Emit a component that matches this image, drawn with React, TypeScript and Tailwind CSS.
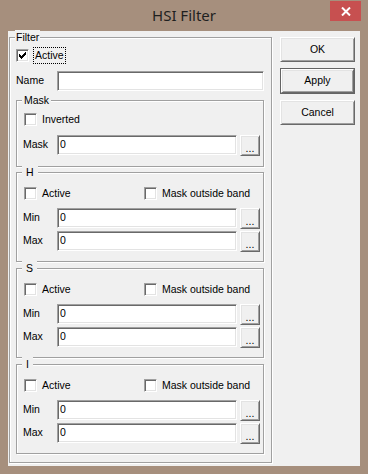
import React from 'react';

// classic 3D borders
const sunken =
  'border border-t-[#a0a0a0] border-l-[#a0a0a0] border-r-white border-b-white shadow-[inset_1px_1px_0_#696969,inset_-1px_-1px_0_#e3e3e3] bg-white';
const raised =
  'border border-t-white border-l-white border-r-[#696969] border-b-[#696969] shadow-[inset_1px_1px_0_#e3e3e3,inset_-1px_-1px_0_#a0a0a0] bg-[#f0f0f0]';
const etched = 'border border-[#a0a0a0] shadow-[inset_1px_1px_0_#fff,1px_1px_0_#fff]';

const CheckBox = ({ checked }: { checked?: boolean }) => (
  <span className={`w-[13px] h-[13px] shrink-0 flex items-center justify-center ${sunken}`}>
    {checked && (
      <svg width="7" height="7" viewBox="0 0 7 7" shapeRendering="crispEdges">
        <polygon points="0,2 2,4 7,-1 7,2 2,7 0,5" fill="#000" />
      </svg>
    )}
  </span>
);

const Group = ({ title, titleClass, className, children }: { title: string; titleClass: string; className: string; children: React.ReactNode }) => (
  <div className={`relative ${etched} ${className}`}>
    <span className={`absolute top-[-8px] bg-[#f0f0f0] leading-[14px] ${titleClass}`}>{title}</span>
    {children}
  </div>
);

const Field = ({ value, className }: { value?: string; className: string }) => (
  <div className={`h-[20px] flex items-center pl-[2px] ${sunken} ${className}`}>{value}</div>
);

const DotsButton = () => (
  <button className={`w-[20px] h-[21px] flex items-end justify-center pb-[3px] leading-[8px] ${raised}`}>...</button>
);

const FieldRow = ({ label, labelWidth, mt }: { label: string; labelWidth: string; mt: string }) => (
  <div className={`flex items-start h-[21px] ${mt}`}>
    <span className={`h-[20px] flex items-center ${labelWidth}`}>{label}</span>
    <Field value="0" className="w-[180px]" />
    <div className="ml-[3px]">
      <DotsButton />
    </div>
  </div>
);

const BandGroup = ({ title, mt }: { title: string; mt: string }) => (
  <Group title={title} titleClass="left-[5px] px-[4px]" className={`w-[248px] h-[90px] pl-[6px] ${mt}`}>
    <div className="flex items-center mt-[14px] h-[13px]">
      <span className="ml-[1px] flex items-center gap-[5px] w-[120px]">
        <CheckBox />
        <span>Active</span>
      </span>
      <span className="flex items-center gap-[5px]">
        <CheckBox />
        <span>Mask outside band</span>
      </span>
    </div>
    <FieldRow label="Min" labelWidth="w-[34px]" mt="mt-[8px]" />
    <FieldRow label="Max" labelWidth="w-[34px]" mt="mt-[2px]" />
  </Group>
);

const DialogButton = ({ label, isDefault }: { label: string; isDefault?: boolean }) =>
  isDefault ? (
    <div className="w-[75px] h-[26px] border border-[#646464]">
      <button className={`w-full h-full flex items-center justify-center ${raised}`}>{label}</button>
    </div>
  ) : (
    <button className={`w-[75px] h-[25px] flex items-center justify-center ${raised}`}>{label}</button>
  );

export default function App() {
  return (
    <div className="w-[368px] h-[474px] bg-[#a68f7d] flex flex-col font-['Liberation_Sans',Arial,sans-serif] text-[10.5px] text-black">
      {/* Title bar */}
      <div className="relative h-[31px] shrink-0 flex items-center justify-center">
        <span className="font-['Noto_Sans',sans-serif] text-[15px] text-[#1f1f1f] leading-none -mt-[1px]">HSI Filter</span>
        <button className="absolute right-[7px] top-[1px] w-[31px] h-[20px] bg-[#c75050] flex items-center justify-center">
          <svg width="10" height="9" viewBox="0 0 10 9">
            <path d="M1 0.5 L9 8.5 M9 0.5 L1 8.5" stroke="#fff" strokeWidth="2" />
          </svg>
        </button>
      </div>

      {/* Client area */}
      <div className="mx-[8px] h-[435px] bg-[#f0f0f0] flex items-start pl-[1px] pt-[6px] gap-[8px]">
        <Group title="Filter" titleClass="left-[5px] px-[1px]" className="w-[263px] h-[426px] pl-[6px]">
          <div className="flex items-center mt-[9px] h-[17px]">
            <CheckBox checked />
            <span className="ml-[4px] h-[17px] px-[1px] flex items-center border border-dotted border-black">Active</span>
          </div>

          <div className="flex items-center mt-[7px] h-[20px]">
            <span className="w-[41px]">Name</span>
            <Field className="w-[207px]" />
          </div>

          <Group title="Mask" titleClass="left-[5px] px-[2px]" className="w-[248px] h-[67px] pl-[6px] mt-[9px]">
            <div className="flex items-center mt-[12px] h-[13px] ml-[1px] gap-[5px]">
              <CheckBox />
              <span>Inverted</span>
            </div>
            <FieldRow label="Mask" labelWidth="w-[34px]" mt="mt-[9px]" />
          </Group>

          <BandGroup title="H" mt="mt-[5px]" />
          <BandGroup title="S" mt="mt-[6px]" />
          <BandGroup title="I" mt="mt-[6px]" />
        </Group>

        <div className="flex flex-col gap-[6px]">
          <DialogButton label="OK" />
          <DialogButton label="Apply" isDefault />
          <DialogButton label="Cancel" />
        </div>
      </div>
    </div>
  );
}
